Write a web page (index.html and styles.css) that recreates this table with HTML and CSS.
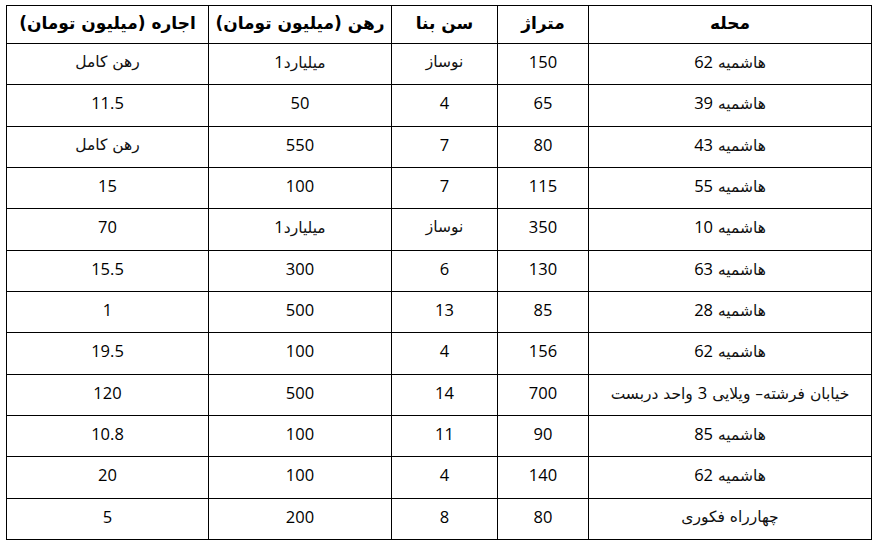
FILE: index.html
```html
<!DOCTYPE html>
<html lang="fa">
<head>
<meta charset="utf-8">
<title>جدول املاک</title>
<link rel="stylesheet" href="styles.css">
</head>
<body>
<table class="grid" dir="rtl">
  <colgroup>
    <col class="c-area">
    <col class="c-size">
    <col class="c-age">
    <col class="c-dep">
    <col class="c-rent">
  </colgroup>
  <thead>
    <tr><th>محله</th><th>متراژ</th><th>سن بنا</th><th>رهن (میلیون تومان)</th><th>اجاره (میلیون تومان)</th></tr>
  </thead>
  <tbody>
    <tr><td class="fa">هاشمیه <span class="n">62</span></td><td>150</td><td class="fa">نوساز</td><td class="fa">میلیارد<span class="n">1</span></td><td class="fa">رهن کامل</td></tr>
    <tr><td class="fa">هاشمیه <span class="n">39</span></td><td>65</td><td>4</td><td>50</td><td>11.5</td></tr>
    <tr><td class="fa">هاشمیه <span class="n">43</span></td><td>80</td><td>7</td><td>550</td><td class="fa">رهن کامل</td></tr>
    <tr><td class="fa">هاشمیه <span class="n">55</span></td><td>115</td><td>7</td><td>100</td><td>15</td></tr>
    <tr><td class="fa">هاشمیه <span class="n">10</span></td><td>350</td><td class="fa">نوساز</td><td class="fa">میلیارد<span class="n">1</span></td><td>70</td></tr>
    <tr><td class="fa">هاشمیه <span class="n">63</span></td><td>130</td><td>6</td><td>300</td><td>15.5</td></tr>
    <tr><td class="fa">هاشمیه <span class="n">28</span></td><td>85</td><td>13</td><td>500</td><td>1</td></tr>
    <tr><td class="fa">هاشمیه <span class="n">62</span></td><td>156</td><td>4</td><td>100</td><td>19.5</td></tr>
    <tr><td class="fa">خیابان فرشته– ویلایی <span class="n">3</span> واحد دربست</td><td>700</td><td>14</td><td>500</td><td>120</td></tr>
    <tr><td class="fa">هاشمیه <span class="n">85</span></td><td>90</td><td>11</td><td>100</td><td>10.8</td></tr>
    <tr><td class="fa">هاشمیه <span class="n">62</span></td><td>140</td><td>4</td><td>100</td><td>20</td></tr>
    <tr><td class="fa">چهارراه فکوری</td><td>80</td><td>8</td><td>200</td><td>5</td></tr>
  </tbody>
</table>
</body>
</html>
```

FILE: styles.css
```css
html, body {
  margin: 0;
  background: #ffffff;
}
body {
  padding: 5px 0 0 6px;
}
.grid {
  border-collapse: collapse;
  table-layout: fixed;
  width: 865px;
  color: #000;
  font-family: "Open Sans", "DejaVu Sans", sans-serif;
  font-size: 16.5px;
}
.c-area { width: 283px; }
.c-size { width: 91px; }
.c-age { width: 106px; }
.c-dep { width: 183px; }
.c-rent { width: 202px; }
.grid th, .grid td {
  border: 1px solid #000;
  text-align: center;
  padding: 0;
}
.grid th {
  height: 38px;
  box-sizing: border-box;
  font-family: "DejaVu Sans", sans-serif;
  font-weight: bold;
  font-size: 17px;
  vertical-align: middle;
  padding-bottom: 3px;
}
.grid td {
  height: 41.33px;
  vertical-align: top;
  padding-top: 7px;
  box-sizing: border-box;
  line-height: 22px;
}
.grid td.fa {
  font-family: "DejaVu Sans", sans-serif;
  font-size: 15.5px;
  font-weight: normal;
  color: #111;
}
.grid td.fa .n {
  font-family: "Open Sans", sans-serif;
  font-size: 16.5px;
  color: #000;
}
```
